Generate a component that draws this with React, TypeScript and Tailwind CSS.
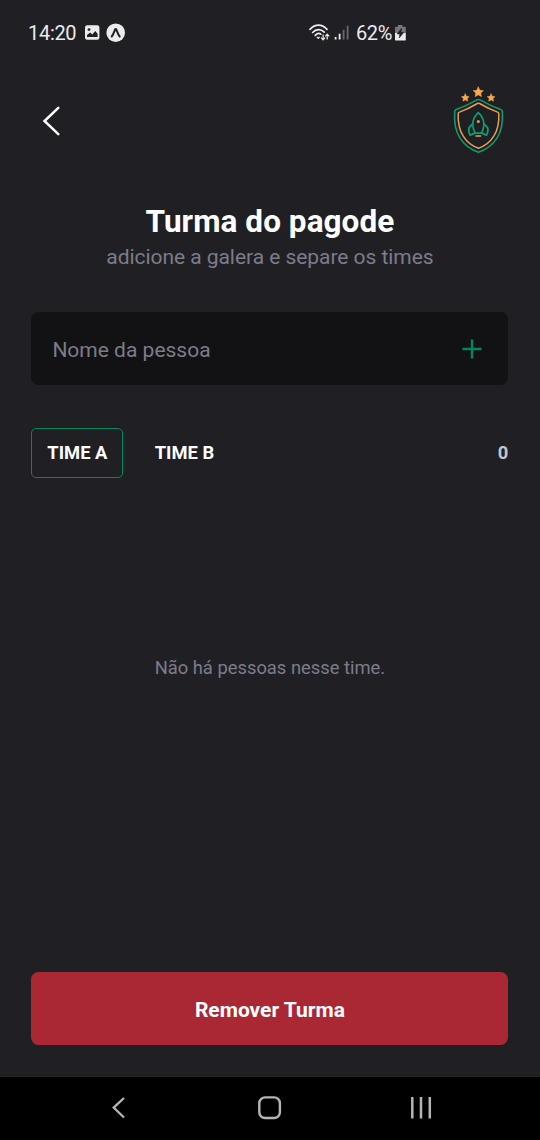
import React from "react";

function Star({ x, y, r }: { x: number; y: number; r: number }) {
  const points = Array.from({ length: 10 }, (_, i) => {
    const a = (Math.PI / 5) * i - Math.PI / 2;
    const d = i % 2 === 0 ? r : r * 0.48;
    return `${(x + d * Math.cos(a)).toFixed(2)},${(y + d * Math.sin(a)).toFixed(2)}`;
  }).join(" ");
  return <polygon points={points} fill="#fba94c" stroke="#fba94c" strokeWidth="0.6" strokeLinejoin="round" />;
}

function Logo() {
  return (
    <svg className="h-[72px] w-[56px]" viewBox="450 84 56 72" fill="none" strokeLinejoin="round" strokeLinecap="round">
      <Star x={478.3} y={92.3} r={5.3} />
      <Star x={465.3} y={97.9} r={4} />
      <Star x={491.1} y={97.9} r={4} />
      <path
        d="M476.9 99.9Q478.5 99.1 480.1 99.9C486.5 103.6 493.5 107 500.6 109.4Q502.2 110 502.3 111.6C503.2 123 501 131.8 496.8 138.4C492.4 145.3 486.3 149.7 478.5 152.2C470.7 149.7 464.6 145.3 460.2 138.4C456 131.8 453.8 123 454.7 111.6Q454.8 110 456.4 109.4C463.5 107 470.5 103.6 476.9 99.9Z"
        stroke="#0b9b6c"
        strokeWidth="1.6"
      />
      <path
        d="M477.4 103.5Q478.5 102.9 479.6 103.5C485.6 107 491.3 109.8 497.6 112.1Q498.7 112.5 498.8 113.7C499.2 122.7 497.5 130.3 493.8 136.2C490.2 142 485.1 146 478.5 148.3C471.9 146 466.8 142 463.2 136.2C459.5 130.3 457.8 122.7 458.2 113.7Q458.3 112.5 459.4 112.1C465.7 109.8 471.4 107 477.4 103.5Z"
        stroke="#e99b55"
        strokeWidth="1.5"
      />
      <g stroke="#08a173" strokeWidth="1.8">
        <path d="M475 133.2C471.7 126.5 471.8 118.5 478.3 112.7C484.8 118.5 484.9 126.5 481.6 133.2Z" />
        <path d="M472.6 124L469.2 127.3C468.3 129.4 468.8 132.5 470.1 135.1L475 133.2" />
        <path d="M484 124L487.4 127.3C488.3 129.4 487.8 132.5 486.5 135.1L481.6 133.2" />
      </g>
      <circle cx="478.3" cy="121.6" r="1.5" fill="#e99b55" />
      <path d="M476 136H480.6" stroke="#e99b55" strokeWidth="1.6" />
    </svg>
  );
}

function StatusBar() {
  return (
    <div className="flex h-[65px] items-center pl-[28px] text-[20px] leading-6 text-[#ebebed]">
      <span className="w-[49px] whitespace-nowrap tracking-[-0.3px]">14:20</span>
      <svg className="ml-[7px] h-5 w-[43px]" viewBox="84 23 43 20">
        <rect x="85" y="25.3" width="14.4" height="14.4" rx="2.2" fill="#ebebed" />
        <circle cx="89" cy="29.6" r="1.4" fill="#202024" />
        <path d="M87 37V35L90.2 32.6L92.3 34.4L95.2 31.1L97.6 33.8V37Z" fill="#202024" />
        <circle cx="115.7" cy="32.7" r="9.3" fill="#ebebed" />
        <path
          d="M111.7 36.5C113.2 34.8 114 32.2 115.1 29.5Q115.7 28.3 116.3 29.5C117.4 32.2 118.2 34.8 119.7 36.5"
          fill="none"
          stroke="#202024"
          strokeWidth="2"
          strokeLinecap="round"
        />
      </svg>
      <svg className="ml-[181px] h-5 w-[43px]" viewBox="308 23 43 20" fill="none">
        <g stroke="#ebebed" strokeWidth="1.7" strokeLinecap="round">
          <path d="M310 29.4C315.2 23.8 321.8 23.8 327 29.4" />
          <path d="M312.6 32.5C316.2 28.6 320.8 28.6 324.3 32.2" />
          <path d="M315.2 35.4C317.4 33.1 319.4 33.1 320.8 34.2" />
        </g>
        <path d="M316.8 37.2H319.8L318.3 39Z" fill="#ebebed" stroke="#ebebed" strokeWidth="0.6" />
        <g stroke="#ebebed" strokeWidth="1.2">
          <path d="M323.1 34.6V39.6M321.1 37.7L323.1 39.8L325.1 37.7" />
          <path d="M327.2 39.4V34.4M325.2 36.3L327.2 34.2L329.2 36.3" />
        </g>
        <path d="M335.6 37V39.6M339.6 33.8V39.6" stroke="#ebebed" strokeWidth="1.8" />
        <path d="M343.6 29.8V39.6M347.6 25.7V39.6" stroke="#68686c" strokeWidth="1.8" />
      </svg>
      <span className="ml-[5px] w-[37px] whitespace-nowrap tracking-[-0.4px]">62%</span>
      <svg className="h-5 w-[14px]" viewBox="393 23 14 20">
        <path d="M398 25H402.4V26.8H404.6Q405.8 26.8 405.8 28V33H395V28Q395 26.8 396.2 26.8H398Z" fill="#77777b" />
        <path d="M395 33H405.8V39.4Q405.8 40.6 404.6 40.6H396.2Q395 40.6 395 39.4Z" fill="#ebebed" />
        <path d="M401.5 28.4L397.2 33.9H400L399.3 37.8L403.7 32.4H400.9Z" fill="#202024" stroke="#202024" strokeWidth="0.7" />
      </svg>
    </div>
  );
}

export default function App() {
  return (
    <div className="flex h-[1140px] w-[540px] flex-col overflow-hidden bg-[#202024] font-['Roboto',sans-serif]">
      <StatusBar />
      <main className="flex flex-1 flex-col pl-[31.4px] pr-[31.6px]">
        <header className="mt-[19px] flex h-[72px] items-center justify-between pl-[7.6px] pr-[2.4px]">
          <button className="flex h-8 w-8 items-center" aria-label="Voltar">
            <svg className="h-8 w-6" viewBox="39 104 24 32" fill="none">
              <path d="M58.3 107.8L44.5 121L58.3 134.1" stroke="#fff" strokeWidth="2.5" strokeLinecap="round" />
            </svg>
          </button>
          <Logo />
        </header>
        <div className="mt-[48px] text-center">
          <h1 className="text-[31.5px] font-bold leading-[36px] tracking-[0.06px] text-white">Turma do pagode</h1>
          <p className="pt-px text-[21px] leading-[33px] tracking-[-0.05px] text-[#7c7c8a]">adicione a galera e separe os times</p>
        </div>
        <div className="mt-[38px] flex h-[73.4px] items-center justify-between rounded-[7.5px] bg-[#121214] pl-[21px] pr-[26.8px]">
          <span className="pt-[5px] text-[21px] text-[#7c7c8a]">Nome da pessoa</span>
          <svg className="h-5 w-5" viewBox="0 0 20 20">
            <path d="M10 .5V19.5M.5 10H19.5" stroke="#00875f" strokeWidth="2.4" />
          </svg>
        </div>
        <div className="mt-[42.6px] flex h-[50px] items-center text-[18.375px] font-bold text-white">
          <button className="flex h-[50px] w-[92px] items-center justify-center rounded-[5px] border border-[#00875f]">TIME A</button>
          <button className="ml-[15px] flex h-[50px] w-[92px] items-center justify-center">TIME B</button>
          <span className="ml-auto text-[#c4c4cc]">0</span>
        </div>
        <p className="mt-[178px] text-center text-[18.375px] leading-6 text-[#7c7c8a]">Não há pessoas nesse time.</p>
        <button className="mb-[31.6px] mt-auto h-[73.4px] rounded-[7.5px] bg-[#aa2834] pt-[5px] text-[21px] font-bold text-white">Remover Turma</button>
      </main>
      <nav className="flex h-[63px] items-center bg-black">
        <svg className="h-[63px] w-[540px]" viewBox="0 1077 540 63" fill="none" stroke="#b5b5b5">
          <path d="M124 1098L113.7 1107.6L124 1117.5" strokeWidth="2.3" />
          <rect x="259.3" y="1097.4" width="20.6" height="20.6" rx="5.8" strokeWidth="2.4" />
          <path d="M412.3 1097V1118.5M421 1097V1118.5M429.8 1097V1118.5" strokeWidth="2.5" />
        </svg>
      </nav>
    </div>
  );
}
